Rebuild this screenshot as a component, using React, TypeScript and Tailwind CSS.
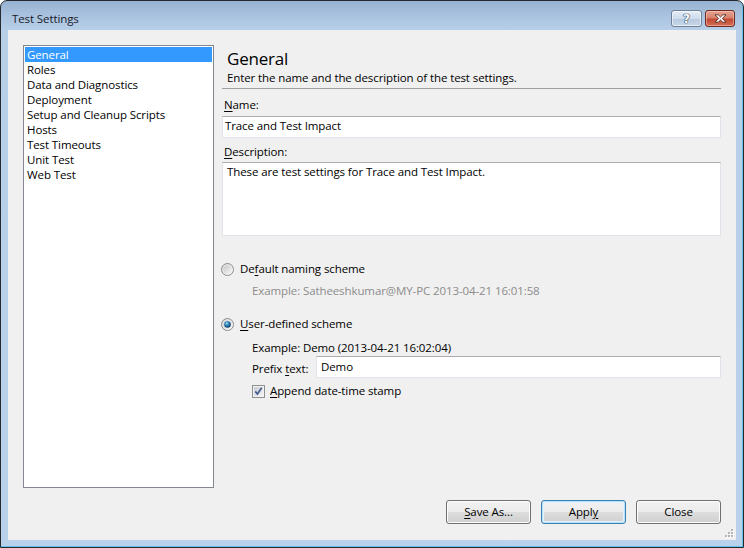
import React from "react";

function U({ children }: { children: React.ReactNode }) {
  return <span className="underline underline-offset-[2px] decoration-[1px]">{children}</span>;
}

function Radio({ checked }: { checked?: boolean }) {
  return (
    <svg width="13" height="13" viewBox="0 0 13 13" className="shrink-0">
      <defs>
        <linearGradient id="rOuter" x1="0" y1="0" x2="1" y2="1">
          <stop offset="0" stopColor="#d6d6d6" />
          <stop offset="1" stopColor="#fbfbfb" />
        </linearGradient>
        <linearGradient id="rInner" x1="0" y1="0" x2="1" y2="1">
          <stop offset="0" stopColor="#c9c9c9" />
          <stop offset="1" stopColor="#f4f4f4" />
        </linearGradient>
        <radialGradient id="rDot" cx="0.4" cy="0.35" r="0.7">
          <stop offset="0" stopColor="#a6dcf7" />
          <stop offset="0.45" stopColor="#2a7db8" />
          <stop offset="1" stopColor="#0b3554" />
        </radialGradient>
      </defs>
      <circle cx="6.5" cy="6.5" r="6" fill="url(#rOuter)" stroke="#8b8e91" strokeWidth="1" />
      <circle cx="6.5" cy="6.5" r="4" fill="url(#rInner)" />
      {checked && <circle cx="6.5" cy="6.5" r="3.3" fill="url(#rDot)" />}
    </svg>
  );
}

function Check() {
  return (
    <svg width="13" height="13" viewBox="0 0 13 13" className="shrink-0">
      <defs>
        <linearGradient id="cIn" x1="0" y1="0" x2="1" y2="1">
          <stop offset="0" stopColor="#c6cbd2" />
          <stop offset="1" stopColor="#f5f5f5" />
        </linearGradient>
      </defs>
      <rect x="0.5" y="0.5" width="12" height="12" fill="#f4f4f4" stroke="#8e8f8f" />
      <rect x="2" y="2" width="9" height="9" fill="url(#cIn)" />
      <path d="M3.3 6.4 L5.4 9 L9.7 2.8" fill="none" stroke="#4b5f93" strokeWidth="1.7" />
    </svg>
  );
}

function Btn({ children, def }: { children: React.ReactNode; def?: boolean }) {
  return (
    <div
      className={
        "w-[85px] h-[24px] rounded-[3px] border flex items-center justify-center text-black leading-[16px] bg-[linear-gradient(to_bottom,#f2f2f2_0%,#ebebeb_50%,#dddddd_51%,#cfcfcf_100%)] " +
        (def
          ? "border-[#3c7fb1] shadow-[inset_0_0_0_1px_#b6e1fa,inset_0_0_0_2px_#e2f2fc]"
          : "border-[#707070] shadow-[inset_0_0_0_1px_#fcfcfc]")
      }
    >
      {children}
    </div>
  );
}

const items = [
  "General",
  "Roles",
  "Data and Diagnostics",
  "Deployment",
  "Setup and Cleanup Scripts",
  "Hosts",
  "Test Timeouts",
  "Unit Test",
  "Web Test",
];

export default function App() {
  return (
    <div className="w-[744px] h-[548px] bg-white font-['Open_Sans','Noto_Sans',sans-serif] text-[11.5px] tracking-[-0.1px] text-black">
      <div className="w-full h-full border border-[#262a2f] rounded-t-[7px] bg-[linear-gradient(to_bottom,#97b2d1_0px,#a6c0dd_12px,#b8cfe8_29px,#b9d1ea_100%)] flex flex-col shadow-[inset_-1px_-1px_0_#5fc4e8]">
        {/* Title bar */}
        <div className="h-[29px] flex items-start justify-between pl-[11px] pr-[8px]">
          <div className="pt-[10px] leading-[16px] text-[#1b1b2a]">Test Settings</div>
          <div className="flex gap-[3px] pt-[9px]">
            <div className="w-[31px] h-[17px] rounded-[3px] border border-[#6f8197] bg-[linear-gradient(to_bottom,#e6eef7_0%,#cfdcec_50%,#b7c9de_51%,#c8d8ea_100%)] shadow-[inset_0_0_0_1px_rgba(255,255,255,0.55)] flex items-center justify-center">
              <span className="font-['DejaVu_Sans',sans-serif] font-bold text-[12px] leading-[12px] text-white [text-shadow:0_0_1px_#223a5a,0_0_1px_#223a5a,0_0_1px_#223a5a]">?</span>
            </div>
            <div className="w-[30px] h-[17px] rounded-[3px] border border-[#6e2b22] bg-[linear-gradient(to_bottom,#e8a493_0%,#d8826d_45%,#c24a34_55%,#d36e55_100%)] shadow-[inset_0_0_0_1px_rgba(255,220,210,0.45)] flex items-center justify-center">
              <svg width="13" height="9" viewBox="0 0 13 9">
                <path
                  d="M1 0.8 H4.2 L6.5 3 L8.8 0.8 H12 L8.3 4.5 L12 8.2 H8.8 L6.5 6 L4.2 8.2 H1 L4.7 4.5 Z"
                  fill="#ffffff"
                  stroke="#3f1a14"
                  strokeWidth="0.8"
                  strokeLinejoin="round"
                />
              </svg>
            </div>
          </div>
        </div>

        {/* Body */}
        <div className="flex-1 flex px-[7px] pb-[7px]">
          <div className="relative flex-1 bg-[#f0f0f0] flex flex-col p-[15px] pb-[16px]">
            <div className="h-[443px] flex gap-[8px]">
              {/* List */}
              <div className="w-[191px] h-full bg-white border border-[#828790] p-[1px]">
                {items.map((it, i) => (
                  <div
                    key={it}
                    className={
                      "h-[15px] leading-[15px] px-[2px] whitespace-nowrap " +
                      (i === 0 ? "bg-[#3399ff] text-white" : "text-black")
                    }
                  >
                    {it}
                  </div>
                ))}
              </div>

              {/* Right panel */}
              <div className="flex-1 flex flex-col">
                <div className="mt-[3px] pl-[5px] text-[17px] leading-[22px] tracking-[-0.2px] text-black">General</div>
                <div className="pl-[5px] leading-[16px]">Enter the name and the description of the test settings.</div>
                <div className="mt-[2px] border-b border-[#a0a0a0]" />

                <div className="mt-[8px] pl-[2px] leading-[16px]">
                  <U>N</U>ame:
                </div>
                <div className="mt-[3px] h-[22px] bg-white border border-[#e2e3ea] border-t-[#abadb3] pl-[2px] leading-[18px]">
                  Trace and Test Impact
                </div>

                <div className="mt-[6px] pl-[2px] leading-[16px]">
                  <U>D</U>escription:
                </div>
                <div className="mt-[2px] h-[74px] bg-white border border-[#e2e3ea] border-t-[#abadb3] pl-[4px] pt-[1px] leading-[16px]">
                  These are test settings for Trace and Test Impact.
                </div>

                <div className="mt-[25px] h-[16px] flex items-center gap-[6px] -ml-[1px]">
                  <Radio />
                  <span className="leading-[16px]">
                    De<U>f</U>ault naming scheme
                  </span>
                </div>
                <div className="mt-[6px] pl-[30px] leading-[16px] text-[#8c8c8c]">
                  Example: Satheeshkumar@MY-PC 2013-04-21 16:01:58
                </div>

                <div className="mt-[17px] h-[16px] flex items-center gap-[6px] -ml-[1px]">
                  <Radio checked />
                  <span className="leading-[16px]">
                    <U>U</U>ser-defined scheme
                  </span>
                </div>
                <div className="mt-[8px] pl-[30px] leading-[16px]">Example: Demo (2013-04-21 16:02:04)</div>
                <div className="h-[22px] flex items-end pl-[30px]">
                  <div className="w-[64px] leading-[16px] pb-[1px]">
                    Prefix <U>t</U>ext:
                  </div>
                  <div className="flex-1 h-[22px] bg-white border border-[#e2e3ea] border-t-[#abadb3] pl-[4px] leading-[19px]">
                    Demo
                  </div>
                </div>
                <div className="mt-[5px] h-[16px] flex items-center gap-[5px] pl-[30px]">
                  <Check />
                  <span className="leading-[16px]">
                    <U>A</U>ppend date-time stamp
                  </span>
                </div>
              </div>
            </div>

            <div className="mt-[12px] flex justify-end gap-[10px]">
              <Btn>
                <U>S</U>ave As...
              </Btn>
              <Btn def>
                Appl<U>y</U>
              </Btn>
              <Btn>Close</Btn>
            </div>

            <svg className="absolute right-[2px] bottom-[2px]" width="10" height="10" viewBox="0 0 10 10">
              {[
                [7, 1],
                [7, 4],
                [4, 4],
                [7, 7],
                [4, 7],
                [1, 7],
              ].map(([x, y]) => (
                <g key={`${x}-${y}`}>
                  <rect x={x + 1} y={y + 1} width="2" height="2" fill="#ffffff" />
                  <rect x={x} y={y} width="2" height="2" fill="#b5b5b5" />
                </g>
              ))}
            </svg>
          </div>
        </div>
      </div>
    </div>
  );
}
